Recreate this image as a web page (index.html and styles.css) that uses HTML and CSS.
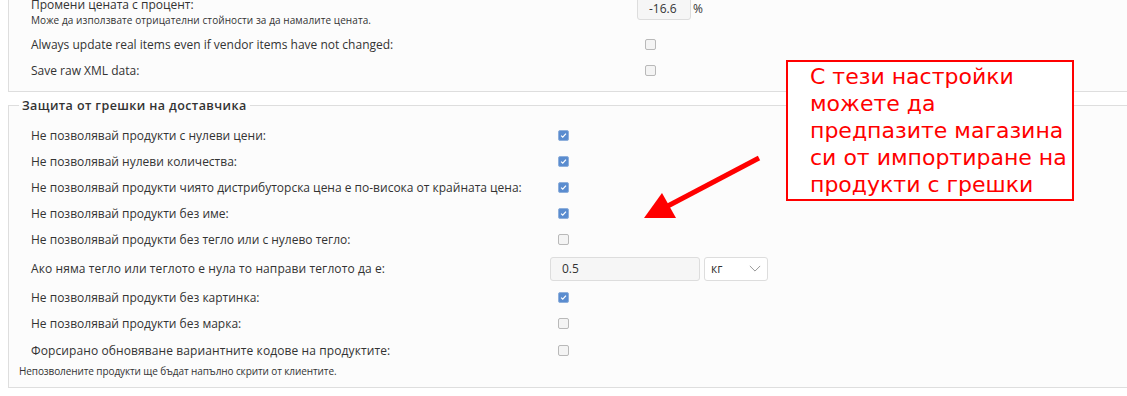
FILE: index.html
```html
<!DOCTYPE html>
<html lang="bg">
<head>
<meta charset="utf-8">
<link rel="stylesheet" href="styles.css">
</head>
<body>
<div class="page">
  <div class="box box-top">
    <div class="row row-tall top-grid">
      <div class="label">
        <div>Промени цената с процент:</div>
        <div class="hint">Може да използвате отрицателни стойности за да намалите цената.</div>
      </div>
      <div class="control"><span class="input small">-16.6</span><span class="unit">%</span></div>
    </div>
    <div class="row top-grid">
      <div class="label">Always update real items even if vendor items have not changed:</div>
      <div class="control"><span class="cb"></span></div>
    </div>
    <div class="row top-grid">
      <div class="label">Save raw XML data:</div>
      <div class="control"><span class="cb"></span></div>
    </div>
  </div>

  <fieldset class="box box-guard">
    <legend>Защита от грешки на доставчика</legend>
    <div class="row grid">
      <div class="label">Не позволявай продукти с нулеви цени:</div>
      <div class="control"><span class="cb on"><svg viewBox="0 0 12 12"><path d="M2.8 6.2 L5 8.3 L9.3 3.6" /></svg></span></div>
    </div>
    <div class="row grid">
      <div class="label">Не позволявай нулеви количества:</div>
      <div class="control"><span class="cb on"><svg viewBox="0 0 12 12"><path d="M2.8 6.2 L5 8.3 L9.3 3.6" /></svg></span></div>
    </div>
    <div class="row grid">
      <div class="label">Не позволявай продукти чиято дистрибуторска цена е по-висока от крайната цена:</div>
      <div class="control"><span class="cb on"><svg viewBox="0 0 12 12"><path d="M2.8 6.2 L5 8.3 L9.3 3.6" /></svg></span></div>
    </div>
    <div class="row grid">
      <div class="label">Не позволявай продукти без име:</div>
      <div class="control"><span class="cb on"><svg viewBox="0 0 12 12"><path d="M2.8 6.2 L5 8.3 L9.3 3.6" /></svg></span></div>
    </div>
    <div class="row row-last grid">
      <div class="label">Не позволявай продукти без тегло или с нулево тегло:</div>
      <div class="control"><span class="cb"></span></div>
    </div>
    <div class="row row-input grid">
      <div class="label alt">Ако няма тегло или теглото е нула то направи теглото да е:</div>
      <div class="control flat">
        <span class="input wide">0.5</span>
        <span class="select">кг<svg viewBox="0 0 14 8"><path d="M1 1 L7 7 L13 1" /></svg></span>
      </div>
    </div>
    <div class="row grid">
      <div class="label">Не позволявай продукти без картинка:</div>
      <div class="control"><span class="cb on"><svg viewBox="0 0 12 12"><path d="M2.8 6.2 L5 8.3 L9.3 3.6" /></svg></span></div>
    </div>
    <div class="row row-last grid">
      <div class="label">Не позволявай продукти без марка:</div>
      <div class="control"><span class="cb"></span></div>
    </div>
    <div class="row grid">
      <div class="label alt">Форсирано обновяване вариантните кодове на продуктите:</div>
      <div class="control"><span class="cb"></span></div>
    </div>
    <div class="note">Непозволените продукти ще бъдат напълно скрити от клиентите.</div>
  </fieldset>

  <div class="callout">С тези настройки можете да предпазите магазина си от импортиране на продукти с грешки</div>
  <svg class="arrow" width="1127" height="396" viewBox="0 0 1127 396">
    <line x1="759" y1="158" x2="664" y2="208" />
    <polygon points="644,218 662,193 676,218" />
  </svg>
</div>
</body>
</html>
```

FILE: styles.css
```css
html, body {
  margin: 0;
  padding: 0;
  background: #ffffff;
  overflow: hidden;
}

.page {
  position: relative;
  display: flow-root;
  width: 1127px;
  height: 396px;
  padding-left: 8px;
  box-sizing: border-box;
  font-family: "Open Sans", "Liberation Sans", sans-serif;
  font-size: 12px;
  color: #333333;
}

.box {
  background: #fcfcfc;
  border: 1px solid #dedede;
  border-right: none;
  margin: 0;
  min-width: 0;
}

.box-top {
  margin-top: -12px;
  padding: 9px 0 8px 22px;
}

.box-guard {
  margin-top: 5px;
  padding: 8px 0 9px 10px;
}

legend {
  padding: 0 3px;
  font-size: 12.5px;
  font-weight: 600;
  letter-spacing: 0.4px;
  color: #333333;
}

.row {
  display: grid;
  align-items: center;
  height: 26px;
}

.row.row-last {
  height: 27px;
}

.top-grid {
  grid-template-columns: 606px auto;
}

.grid {
  grid-template-columns: 519px auto;
  padding-left: 12px;
}

.row-tall {
  height: 33px;
  align-items: start;
}

.row-tall .label {
  line-height: 14px;
}

.row.row-input {
  height: 31px;
}

.hint {
  font-size: 10px;
  margin-top: 1px;
  letter-spacing: 0.08px;
}

.label.alt {
  letter-spacing: 0.1px;
}

.control {
  display: flex;
  align-items: center;
  padding-left: 8px;
}

.control.flat {
  padding-left: 0;
  gap: 4px;
}

.cb {
  box-sizing: border-box;
  width: 11px;
  height: 11px;
  border: 1px solid #b9b9b9;
  border-radius: 2px;
  background: #f4f4f4;
  display: flex;
}

.cb.on {
  background: #5a8ccf;
  border-color: #8fb0dc;
}

.cb svg {
  width: 100%;
  height: 100%;
}

.cb path {
  fill: none;
  stroke: #ffffff;
  stroke-width: 1.6;
}

.input {
  box-sizing: border-box;
  display: flex;
  align-items: center;
  height: 24px;
  background: #f6f6f6;
  border: 1px solid #dddddd;
  border-radius: 3px;
  padding-left: 11px;
  color: #333333;
}

.input.small {
  width: 54px;
  margin-left: -8px;
  margin-top: -2px;
}

.unit {
  margin-left: 2px;
  margin-top: -2px;
}

.input.wide {
  width: 150px;
}

.select {
  box-sizing: border-box;
  width: 64px;
  height: 24px;
  display: flex;
  align-items: center;
  justify-content: space-between;
  padding: 0 6px 0 6px;
  background: #ffffff;
  border: 1px solid #dddddd;
  border-radius: 3px;
}

.select svg {
  width: 12px;
  height: 7px;
}

.select path {
  fill: none;
  stroke: #888888;
  stroke-width: 1;
}

.note {
  font-size: 10px;
  line-height: 13px;
  margin-top: 2px;
  letter-spacing: -0.1px;
}

.callout {
  position: absolute;
  left: 786px;
  top: 60px;
  width: 288px;
  height: 141px;
  box-sizing: border-box;
  border: 2px solid #ff0000;
  background: #ffffff;
  padding: 1px 4px 0 22px;
  font-family: "DejaVu Sans", sans-serif;
  font-size: 22px;
  line-height: 27px;
  color: #ff0000;
}

.arrow {
  position: absolute;
  left: 0;
  top: 0;
  pointer-events: none;
}

.arrow line {
  stroke: #ff0000;
  stroke-width: 5;
}

.arrow polygon {
  fill: #ff0000;
}
```
